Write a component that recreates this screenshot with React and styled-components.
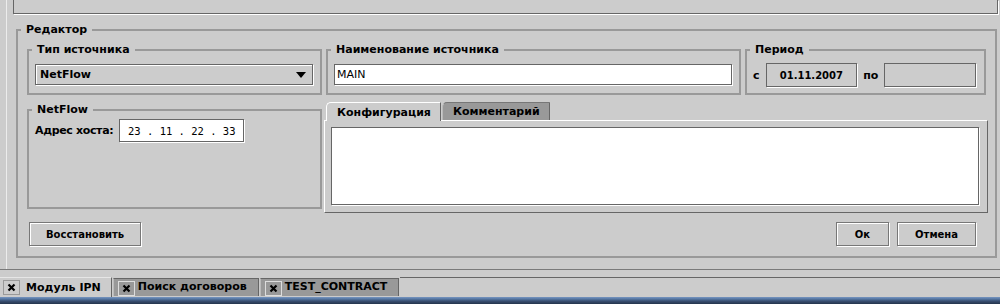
import React from 'react';
import styled, { createGlobalStyle } from 'styled-components';

const Global = createGlobalStyle`
  html, body { margin: 0; padding: 0; background: #cccccc; }
  body {
    font-family: "DejaVu Sans", "Liberation Sans", sans-serif;
    font-size: 11px;
    color: #000;
  }
  * { box-sizing: border-box; }
`;

const Screen = styled.div`
  width: 1000px;
  height: 304px;
  overflow: hidden;
  display: flex;
  flex-direction: column;
  background: #cccccc;
`;

const Workspace = styled.div`
  height: 270px;
  flex: none;
  padding-left: 6px;
  border-bottom: 1px solid #7a7a7a;
`;

const Frame = styled.div`
  height: 100%;
  border-left: 1px solid #ececec;
  padding: 0 2px 0 6px;
`;

const TopPanel = styled.div`
  height: 14px;
  border: 1px solid #666;
  border-top: none;
  box-shadow: 1px 1px 0 #fff;
`;

const Fieldset = styled.fieldset`
  margin: ${p => p.$margin || '0'};
  padding: 0;
  min-width: 0;
  border: 2px solid #999;
  grid-column: ${p => p.$col || 'auto'};
`;

const Legend = styled.legend`
  margin-left: 3px;
  padding: 0 5px;
  height: 14px;
  line-height: 14px;
  font-weight: bold;
`;

const GroupBody = styled.div`
  padding: ${p => p.$pad || '7px 7px 8px 6px'};
  height: ${p => p.$height || 'auto'};
  display: flex;
  align-items: ${p => p.$align || 'center'};
  gap: ${p => p.$gap || '0'};
`;

const GroupBox = ({ title, margin, col, pad, height, align, gap, children }) => (
  <Fieldset $margin={margin} $col={col}>
    <Legend>{title}</Legend>
    <GroupBody $pad={pad} $height={height} $align={align} $gap={gap}>
      {children}
    </GroupBody>
  </Fieldset>
);

const EditorGrid = styled.div`
  padding: 6px 9px 10px 9px;
  display: grid;
  grid-template-columns: 295px 415px 1fr;
  column-gap: 4px;
  row-gap: 7px;
  align-items: start;
`;

const Combo = styled.div`
  flex: 1;
  height: 21px;
  display: flex;
  align-items: center;
  justify-content: space-between;
  padding: 0 6px 0 4px;
  border: 1px solid #666;
  box-shadow: inset 1px 1px 0 #fff, 1px 1px 0 #fff;
  font-weight: bold;
`;

const Arrow = styled.span`
  width: 0;
  height: 0;
  border-left: 5px solid transparent;
  border-right: 5px solid transparent;
  border-top: 6px solid #000;
`;

const TextField = styled.div`
  flex: ${p => (p.$width ? 'none' : '1')};
  width: ${p => p.$width || 'auto'};
  height: ${p => p.$h || '21px'};
  display: flex;
  align-items: center;
  justify-content: ${p => (p.$center ? 'center' : 'flex-start')};
  padding: 0 2px;
  background: ${p => (p.$gray ? '#cccccc' : '#fff')};
  border: 1px solid #666;
  box-shadow: 1px 1px 0 #fff;
  font-family: ${p => (p.$mono ? '"DejaVu Sans Mono", "Liberation Mono", monospace' : 'inherit')};
  font-size: ${p => p.$size || '11px'};
  font-weight: ${p => (p.$bold ? 'bold' : 'normal')};
  white-space: pre;
`;

const Label = styled.span`
  font-weight: bold;
  white-space: nowrap;
  line-height: ${p => p.$lh || 'normal'};
  letter-spacing: ${p => p.$tight ? '-0.35px' : 'normal'};
`;

const TabPane = styled.div`
  grid-column: 2 / 4;
  margin: 0 -2px;
  display: flex;
  flex-direction: column;
`;

const TabStrip = styled.div`
  height: 18px;
  display: flex;
  align-items: flex-end;
  padding-left: 2px;
`;

const Tab = styled.div`
  position: relative;
  z-index: ${p => (p.$active ? 1 : 0)};
  height: ${p => (p.$active ? '19px' : '18px')};
  margin-bottom: ${p => (p.$active ? '-1px' : '0')};
  padding: 0 9px 0 10px;
  display: flex;
  align-items: center;
  font-weight: bold;
  background: ${p => (p.$active ? '#cccccc' : '#999999')};
  border-top: 1px solid ${p => (p.$active ? '#fff' : '#777')};
  border-left: 1px solid ${p => (p.$active ? '#fff' : '#bbb')};
  border-right: 1px solid #666;
  border-top-left-radius: 5px;
  margin-right: 1px;
`;

const TabPanel = styled.div`
  height: 93px;
  padding: 6px 8px 7px 6px;
  border-top: 1px solid #fff;
  border-left: 1px solid #fff;
  border-right: 1px solid #666;
  border-bottom: 1px solid #666;
  display: flex;
`;

const TextArea = styled.div`
  flex: 1;
  background: #fff;
  border: 1px solid #666;
  box-shadow: 1px 1px 0 #fff;
`;

const ButtonRow = styled.div`
  grid-column: 1 / 4;
  margin-top: 2px;
  display: flex;
  gap: 8px;
  padding: 0 10px 0 2px;
`;

const Spacer = styled.div`
  flex: 1;
`;

const Button = styled.div`
  height: 24px;
  padding: 0 ${p => p.$pad || '16px'};
  display: flex;
  align-items: center;
  justify-content: center;
  font-weight: bold;
  font-size: 10px;
  border: 1px solid #777;
  box-shadow: inset 1px 1px 0 #fff, 1px 1px 0 #fff;
`;

const DocBar = styled.div`
  height: 27px;
  flex: none;
  padding-top: 7px;
  display: flex;
  align-items: stretch;
`;

const DocTab = styled.div`
  height: ${p => (p.$active ? '20px' : '18px')};
  margin-top: ${p => (p.$active ? '0' : '1px')};
  margin-right: 1px;
  padding: ${p => (p.$active ? '0 10px 0 3px' : '0 11px 0 4px')};
  display: flex;
  align-items: ${p => (p.$active ? 'center' : 'flex-start')};
  gap: ${p => (p.$active ? '6px' : '3px')};
  font-weight: bold;
  font-size: 11px;
  line-height: 15px;
  background: ${p => (p.$active ? '#cccccc' : '#999999')};
  border-top: 1px solid ${p => (p.$active ? '#e6e6e6' : '#666')};
  border-right: 1px solid #666;
  border-left: ${p => (p.$active ? 'none' : '1px solid #bbb')};
  white-space: nowrap;
`;

const DocFill = styled.div`
  flex: 1;
  border-top: 1px solid #666;
`;

const CloseBox = styled.span`
  width: 17px;
  height: 15px;
  flex: none;
  display: flex;
  align-items: center;
  justify-content: center;
  margin-top: ${p => (p.$active ? '0' : '2px')};
  border: 1px solid ${p => (p.$active ? '#999' : '#ddd')};
  background: ${p => (p.$active ? '#cccccc' : '#999999')};
`;

const TaskBar = styled.div`
  height: 7px;
  flex: none;
  background: linear-gradient(to bottom, #7896c0 0px, #5577a3 2px, #3a5072 4px, #24344c 7px);
`;

const CloseIcon = () => (
  <svg width="9" height="9" viewBox="0 0 9 9">
    <path d="M1.5 1.5 L7.5 7.5 M7.5 1.5 L1.5 7.5" stroke="#000" strokeWidth="2.2" />
  </svg>
);

const DocTabItem = ({ active, children }) => (
  <DocTab $active={active}>
    <CloseBox $active={active}>
      <CloseIcon />
    </CloseBox>
    {children}
  </DocTab>
);

export default function App() {
  return (
    <Screen>
      <Global />
      <Workspace>
        <Frame>
          <TopPanel />
          <Fieldset $margin="9px 1px 0 3px">
            <Legend>Редактор</Legend>
            <EditorGrid>
              <GroupBox title="Тип источника">
                <Combo>
                  NetFlow
                  <Arrow />
                </Combo>
              </GroupBox>
              <GroupBox title="Наименование источника">
                <TextField>MAIN</TextField>
              </GroupBox>
              <GroupBox title="Период" pad="6px 8px 6px 6px" gap="6px">
                <Label>с</Label>
                <TextField $gray $center $bold $size="10px" $h="24px">01.11.2007</TextField>
                <Label>по</Label>
                <TextField $gray $h="24px" />
              </GroupBox>

              <GroupBox title="NetFlow" margin="1px 0 0 0" pad="2px 6px 0 6px" height="90px" align="flex-start" gap="6px">
                <Label $lh="23px" $tight>Адрес хоста:</Label>
                <TextField $width="125px" $h="23px" $mono $center $size="10.5px">23 . 11 . 22 . 33</TextField>
              </GroupBox>
              <TabPane>
                <TabStrip>
                  <Tab $active>Конфигурация</Tab>
                  <Tab>Комментарий</Tab>
                </TabStrip>
                <TabPanel>
                  <TextArea />
                </TabPanel>
              </TabPane>

              <ButtonRow>
                <Button>Восстановить</Button>
                <Spacer />
                <Button $pad="18px">Ок</Button>
                <Button $pad="17px">Отмена</Button>
              </ButtonRow>
            </EditorGrid>
          </Fieldset>
        </Frame>
      </Workspace>
      <DocBar>
        <DocTabItem active>Модуль IPN</DocTabItem>
        <DocTabItem>Поиск договоров</DocTabItem>
        <DocTabItem>TEST_CONTRACT</DocTabItem>
        <DocFill />
      </DocBar>
      <TaskBar />
    </Screen>
  );
}
